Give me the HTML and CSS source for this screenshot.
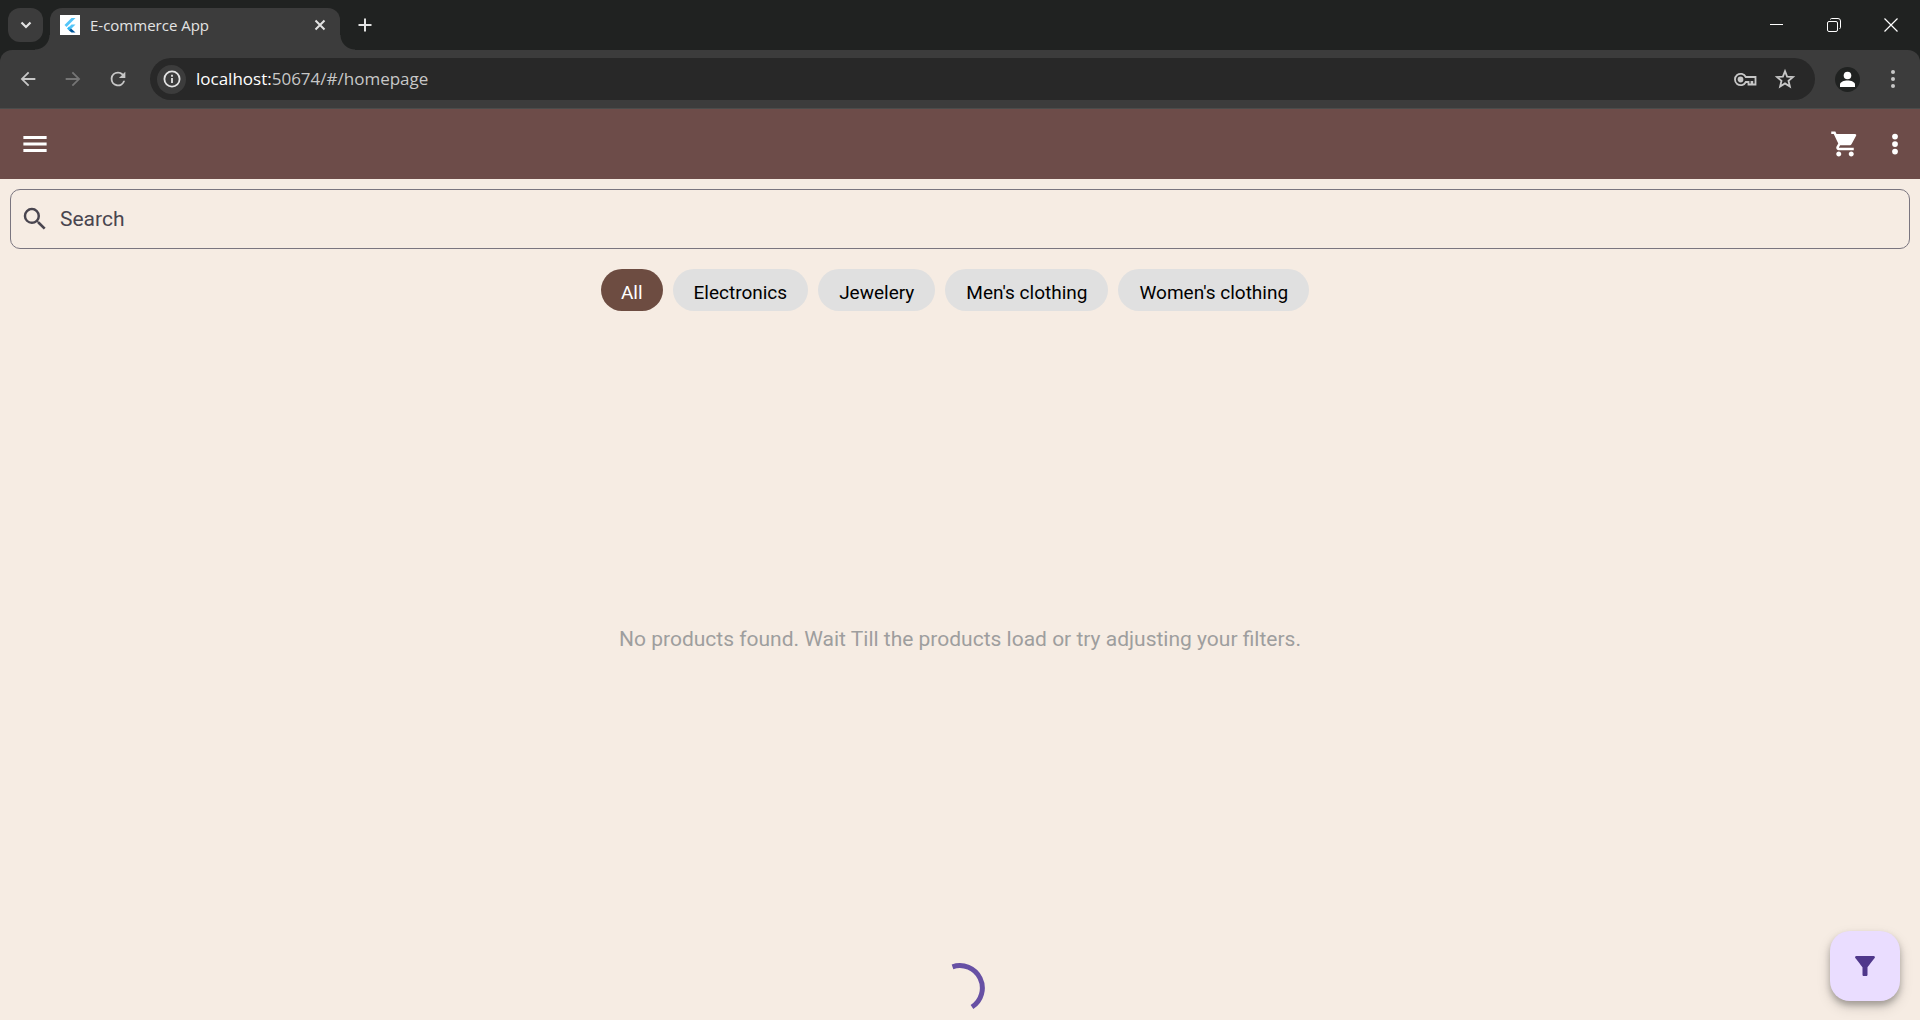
FILE: index.html
```html
<!DOCTYPE html>
<html lang="en">
<head>
<meta charset="utf-8">
<meta name="viewport" content="width=device-width, initial-scale=1">
<title>E-commerce App</title>
<link rel="stylesheet" href="styles.css">
</head>
<body>
<header class="browser">
  <div class="tabstrip">
    <button class="tab-search" type="button" aria-label="Search tabs">
      <svg width="20" height="20" viewBox="0 0 20 20"><path d="M5.500 7.500 10 12l4.500-4.500" fill="none" stroke="currentColor" stroke-width="2.200"/></svg>
    </button>
    <div class="tab">
      <svg class="favicon" width="20" height="20" viewBox="0 0 20 20" aria-hidden="true">
        <path fill="#fff" d="M0 0h20v20H0z"/>
        <path fill="#54c5f8" d="M11.500 3h4L6.500 12l-2-2z"/>
        <path fill="#54c5f8" d="M11.500 9.500h4L11 14l-2-2z"/>
        <path fill="#29b6f6" d="m7 13.500 2-2 2 2-2 2z"/>
        <path fill="#01579b" d="m9 15.500 2-2 4.500 4h-4z"/>
      </svg>
      <span class="tab-title">E-commerce App</span>
      <button class="tab-close" type="button" aria-label="Close tab">
        <svg width="20" height="20" viewBox="0 0 20 20"><path d="m5.500 5.500 9 9m0-9-9 9" stroke="currentColor" stroke-width="2"/></svg>
      </button>
    </div>
    <button class="new-tab" type="button" aria-label="New tab">
      <svg width="20" height="20" viewBox="0 0 20 20"><path d="M10 3.500v13M3.500 10h13" stroke="currentColor" stroke-width="2"/></svg>
    </button>
    <div class="window-controls">
      <button type="button" aria-label="Minimize"><svg width="16" height="16" viewBox="0 0 16 16"><path d="M1 7.500h13" stroke="#fff"/></svg></button>
      <button type="button" aria-label="Restore"><svg width="16" height="16" viewBox="0 0 16 16" fill="none" stroke="#fff"><rect x="1.500" y="4.500" width="10" height="10" rx="1.500"/><path d="M4.500 2.500q0-1 1-1H12a2.500 2.500 0 0 1 2.500 2.500v6.500q0 1-1 1"/></svg></button>
      <button type="button" aria-label="Close"><svg width="16" height="16" viewBox="0 0 16 16"><path d="m1.500 1.500 13 13m0-13-13 13" stroke="#fff" stroke-width="1.200"/></svg></button>
    </div>
  </div>
  <nav class="toolbar" aria-label="Browser">
    <div class="nav-buttons">
      <button type="button" aria-label="Back"><svg width="22" height="22" viewBox="0 0 24 24"><path fill="currentColor" d="M20 11H7.830l5.590-5.590L12 4l-8 8 8 8 1.410-1.410L7.830 13H20z"/></svg></button>
      <button type="button" aria-label="Forward" disabled><svg width="22" height="22" viewBox="0 0 24 24"><path fill="currentColor" d="m12 4-1.410 1.410L16.170 11H4v2h12.170l-5.580 5.590L12 20l8-8z"/></svg></button>
      <button type="button" aria-label="Reload"><svg width="22" height="22" viewBox="0 0 24 24"><path fill="currentColor" d="M17.650 6.350A7.960 7.960 0 0 0 12 4a8 8 0 1 0 7.730 10h-2.080A6 6 0 1 1 12 6c1.660 0 3.140.69 4.220 1.780L13 11h7V4z"/></svg></button>
    </div>
    <div class="omnibox">
      <button class="site-info" type="button" aria-label="Site information"><svg width="20" height="20" viewBox="0 0 20 20"><circle cx="10" cy="10" r="7.600" fill="none" stroke="currentColor" stroke-width="1.800"/><path d="M10 9v5M10 5.800v2" stroke="currentColor" stroke-width="1.800"/></svg></button>
      <div class="url"><span class="host">localhost:</span>50674/#/homepage</div>
      <button class="omni-action" type="button" aria-label="Saved passwords"><svg width="24" height="24" viewBox="0 0 24 24" fill="none" stroke="currentColor" stroke-width="1.800"><path d="M12.800 10A5.700 5.700 0 1 0 12.800 15H15.500v2.500h3V15h.8v2.500H22.500V10z"/><circle cx="7.500" cy="12.500" r="2" fill="currentColor"/></svg></button>
      <button class="omni-action" type="button" aria-label="Bookmark"><svg width="24" height="24" viewBox="0 0 24 24"><path d="m12 4.200 2.100 5.400 5.900.4-4.500 3.800 1.400 5.700-4.900-3.100-4.900 3.100 1.400-5.700L4 10l5.900-.4z" fill="none" stroke="currentColor" stroke-width="1.800"/></svg></button>
    </div>
    <button class="profile" type="button" aria-label="Profile"><svg width="25" height="25" viewBox="0 0 25 25"><circle cx="12.500" cy="12.500" r="12.500" fill="#202221"/><circle cx="12.500" cy="8.500" r="3.800" fill="#fff"/><path fill="#fff" d="M5 20v-2.500c0-2.500 4-4 7.500-4s7.500 1.500 7.500 4V20z"/></svg></button>
    <button class="chrome-menu" type="button" aria-label="Browser menu"><svg width="20" height="20" viewBox="0 0 20 20" fill="currentColor"><circle cx="10" cy="3" r="2"/><circle cx="10" cy="10" r="2"/><circle cx="10" cy="17" r="2"/></svg></button>
  </nav>
</header>

<div class="app">
  <header class="appbar">
    <button type="button" aria-label="Open menu"><svg width="30" height="30" viewBox="0 0 24 24" fill="currentColor"><path d="M2.700 18.400h18.600v-2.400H2.700zm0-5.200h18.600v-2.400H2.700zm0-7.600V8h18.600V5.600z"/></svg></button>
    <div class="appbar-actions">
      <button type="button" aria-label="Cart"><svg width="30" height="30" viewBox="0 0 24 24" fill="currentColor"><path d="M7 18c-1.100 0-1.990.9-1.990 2S5.900 22 7 22s2-.9 2-2-.9-2-2-2zM1 2v2h2l3.600 7.590-1.350 2.450c-.16.28-.25.61-.25.96 0 1.100.9 2 2 2h12v-2H7.420c-.14 0-.25-.11-.25-.25l.03-.12.900-1.630h7.450c.75 0 1.410-.41 1.750-1.030l3.580-6.490A1 1 0 0 0 20 4H5.210l-.94-2zm16 16c-1.100 0-1.990.9-1.990 2s.89 2 1.990 2 2-.9 2-2-.9-2-2-2z"/></svg></button>
      <button type="button" aria-label="More options"><svg width="30" height="30" viewBox="0 0 24 24" fill="currentColor"><circle cx="12" cy="6" r="2.300"/><circle cx="12" cy="12" r="2.300"/><circle cx="12" cy="18" r="2.300"/></svg></button>
    </div>
  </header>
  <main class="content">
    <label class="search">
      <svg width="30" height="30" viewBox="0 0 24 24" fill="currentColor" aria-hidden="true"><path d="M15.500 14h-.79l-.28-.27A6.470 6.470 0 0 0 16 9.500 6.500 6.500 0 1 0 9.500 16c1.610 0 3.090-.59 4.230-1.570l.27.28v.79l5 4.990L20.490 19zm-6 0C7.010 14 5 11.990 5 9.500S7.010 5 9.500 5 14 7.010 14 9.500 11.990 14 9.500 14z"/></svg>
      <input type="text" placeholder="Search" aria-label="Search">
    </label>
    <div class="chips">
      <button class="chip chip-active" type="button">All</button>
      <button class="chip" type="button">Electronics</button>
      <button class="chip" type="button">Jewelery</button>
      <button class="chip" type="button">Men's clothing</button>
      <button class="chip" type="button">Women's clothing</button>
    </div>
    <p class="empty">No products found. Wait Till the products load or try adjusting your filters.</p>
    <div class="loading" role="status" aria-label="Loading">
      <svg width="50" height="50" viewBox="0 0 50 50"><path d="M17.500 3.800A22.500 22.500 0 0 1 37 44" fill="none" stroke="#6750a4" stroke-width="5"/></svg>
    </div>
  </main>
  <button class="fab" type="button" aria-label="Filter products"><svg width="30" height="30" viewBox="0 0 24 24" fill="currentColor"><path d="M4.250 5.610C6.270 8.200 10 13 10 13v6c0 .55.45 1 1 1h2c.55 0 1-.45 1-1v-6s3.720-4.800 5.740-7.390A1 1 0 0 0 18.950 4H5.040a1 1 0 0 0-.79 1.610z"/></svg></button>
</div>
</body>
</html>
```
FILE: styles.css
```css
* {
  box-sizing: border-box;
}

body {
  display: flex;
  flex-direction: column;
  min-height: 100vh;
  margin: 0;
  background: #f6ece3;
  font-family: Roboto, sans-serif;
}

button {
  display: flex;
  align-items: center;
  justify-content: center;
  flex: none;
  padding: 0;
  border: 0;
  background: none;
  color: inherit;
  font: inherit;
}

svg {
  display: block;
  flex: none;
}

/* Browser window */
.browser {
  background: #202221;
  color: #e3e3e3;
  font-family: "Open Sans", sans-serif;
}

.tabstrip {
  display: flex;
  height: 50px;
  padding-left: 8px;
}

.tab-search {
  width: 35px;
  height: 34px;
  margin: 8px 7px 0 0;
  border-radius: 12px;
  background: #3c3c3c;
}

.tab {
  position: relative;
  display: flex;
  align-items: center;
  width: 290px;
  margin-top: 8px;
  padding: 0 10px 8px;
  border-radius: 12px 12px 0 0;
  background: #3c3c3c;
}

.tab::before,
.tab::after {
  content: "";
  position: absolute;
  bottom: 0;
  width: 15px;
  height: 15px;
}

.tab::before {
  right: 100%;
  background: radial-gradient(circle at 0 0, transparent 14px, #3c3c3c 15px);
}

.tab::after {
  left: 100%;
  background: radial-gradient(circle at 100% 0, transparent 14px, #3c3c3c 15px);
}

.tab-title {
  flex: 1;
  padding-left: 10px;
  font-size: 15px;
  line-height: 20px;
}

.new-tab {
  width: 50px;
  height: 50px;
  padding-bottom: 1px;
}

.window-controls {
  display: flex;
  margin-left: auto;
  padding-right: 1px;
}

.window-controls button {
  width: 57px;
  height: 50px;
}

.toolbar {
  display: flex;
  align-items: center;
  height: 59px;
  padding: 0 5px;
  border-bottom: 1px solid #4a4c4b;
  border-radius: 12px 12px 0 0;
  background: #3c3c3c;
  color: #c7c7c7;
}

.nav-buttons {
  display: flex;
  margin-right: 10px;
}

.nav-buttons button {
  width: 45px;
  height: 42px;
}

.nav-buttons button:disabled {
  color: #757575;
}

.omnibox {
  display: flex;
  align-items: center;
  flex: 1;
  height: 42px;
  padding: 0 10px 0 7px;
  border-radius: 21px;
  background: #282828;
}

.site-info {
  width: 29px;
  height: 29px;
  border-radius: 50%;
  background: #3c3c3c;
  color: #e3e3e3;
}

.url {
  flex: 1;
  padding-left: 10px;
  font-size: 17px;
  line-height: 24px;
}

.host {
  color: #fff;
}

.omni-action {
  width: 40px;
  height: 40px;
}

.profile {
  width: 45px;
  margin-left: 10px;
}

.chrome-menu {
  width: 45px;
}

/* Shop page */
.app {
  position: relative;
  display: flex;
  flex-direction: column;
  flex: 1;
}

.appbar {
  display: flex;
  align-items: center;
  justify-content: space-between;
  height: 70px;
  padding-left: 10px;
  background: #6d4c49;
  color: #fff;
}

.appbar button {
  width: 50px;
  height: 50px;
}

.appbar-actions {
  display: flex;
}

.content {
  display: flex;
  flex-direction: column;
  flex: 1;
}

.search {
  display: flex;
  align-items: center;
  height: 60px;
  margin: 10px;
  padding: 0 9px;
  border: 1px solid #7a757f;
  border-radius: 10px;
  color: #49454f;
}

.search input {
  flex: 1;
  min-width: 0;
  padding: 0 10px;
  border: 0;
  outline: 0;
  background: none;
  color: #1d1b20;
  font: 21px/30px Roboto, sans-serif;
}

.search input::placeholder {
  color: #49454f;
  opacity: 1;
}

.chips {
  display: flex;
  flex-wrap: wrap;
  justify-content: center;
  gap: 10px;
  padding: 10px 20px 10px 10px;
}

.chip {
  height: 42px;
  padding: 12px 21px 6px;
  border-radius: 21px;
  background: #e0e0e0;
  color: #000;
  font-size: 19px;
  line-height: 24px;
}

.chip-active {
  padding-right: 20px;
  padding-left: 20px;
  background: #6d4c41;
  color: #fff;
}

.empty {
  display: flex;
  align-items: center;
  justify-content: center;
  flex: 1;
  margin: 0;
  color: #9e9e9e;
  font-size: 21px;
  line-height: 30px;
}

.loading {
  display: flex;
  justify-content: center;
  padding: 7px 0;
}

.fab {
  position: absolute;
  right: 20px;
  bottom: 19px;
  width: 70px;
  height: 70px;
  border-radius: 20px;
  background: #eaddff;
  color: #4f378b;
  box-shadow: 0 4px 6px rgba(0, 0, 0, 0.25), 0 6px 14px rgba(0, 0, 0, 0.15);
}
```
